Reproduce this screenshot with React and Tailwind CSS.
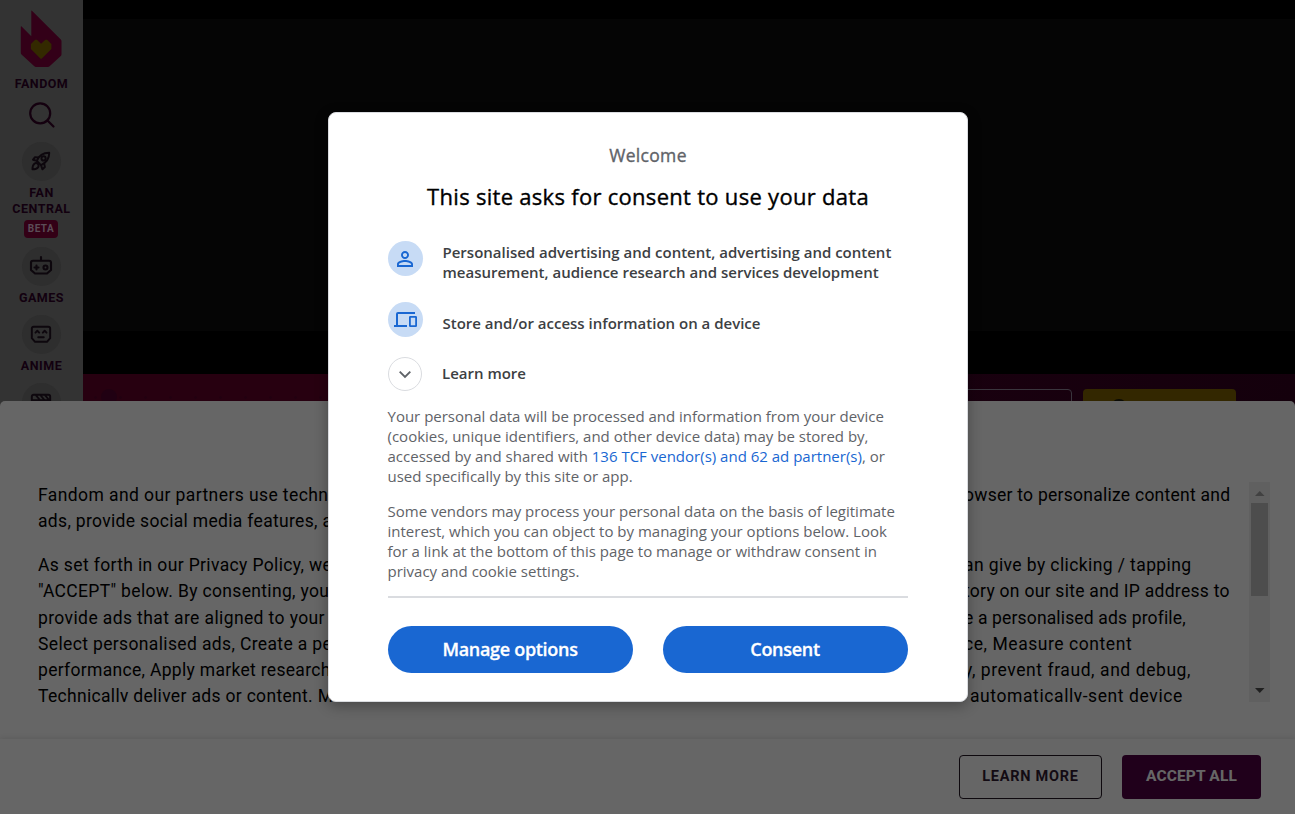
import React from "react";

const sheetRows = [
  { left: "Fandom and our partners use techn", right: "owser to personalize content and", leftClass: "tracking-[0.41px]", rightClass: "ml-[632px] tracking-[0.26px]" },
  { left: "ads, provide social media features, a", right: "", leftClass: "tracking-[0.32px]", rightClass: "" },
  null,
  { left: "As set forth in our Privacy Policy, we", right: "an give by clicking / tapping", leftClass: "tracking-[0.36px]", rightClass: "ml-[632px] tracking-[0.4px]" },
  { left: '"ACCEPT" below. By consenting, you', right: "tory on our site and IP address to", leftClass: "tracking-[0.34px]", rightClass: "ml-[632px] tracking-[0.27px]" },
  { left: "provide ads that are aligned to your", right: "e a personalised ads profile,", leftClass: "tracking-[0.39px]", rightClass: "ml-[632px] tracking-[0.15px]" },
  { left: "Select personalised ads, Create a pe", right: "ce, Measure content", leftClass: "tracking-[0.36px]", rightClass: "ml-[632px] tracking-[0.56px]" },
  { left: "performance, Apply market research", right: "y, prevent fraud, and debug,", leftClass: "tracking-[0.31px]", rightClass: "ml-[632px] tracking-[0.57px]" },
  { left: "Technically deliver ads or content. M", right: "automatically-sent device", leftClass: "tracking-[0.32px]", rightClass: "ml-[638px] tracking-[0.59px]" },
];

function Circle({ children, className = "" }) {
  return (
    <div className={`flex size-[39px] shrink-0 items-center justify-center rounded-full bg-[#2e2e2e] text-[#0d070d] ${className}`}>
      {children}
    </div>
  );
}

function IconSvg({ children, className = "size-6" }) {
  return (
    <svg className={`mr-px ${className}`} viewBox="0 0 24 24" fill="none" stroke="currentColor" strokeWidth="2.1" strokeLinecap="round" strokeLinejoin="round">
      {children}
    </svg>
  );
}

function Sidebar() {
  return (
    <aside className="flex h-full w-[83px] shrink-0 flex-col items-center bg-[#333333] text-center text-[12.5px] leading-4 font-bold tracking-[0.5px] text-[#12000f]">
      <svg className="mt-[10px] mr-[1.500px] shrink-0" width="42" height="58" viewBox="0 0 42 58">
        <path d="M11.300 1.200q0-1.200.9-.3L40.800 29.600q.7.700.7 1.800v12.800c0 .7-.2 1.300-.7 1.800L29.600 56.200q-.7.700-1.800.7H16q-1 0-1.700-.7L1.500 44.600q-.7-.7-.7-1.800V17q0-1.200.8-.4l9.700 9.600z" fill="#330018" />
        <path d="M16.900 29.800h-1.700l-4.300 4.200v5l9.200 9.300q1 1 2 0l9.300-9.300v-5L27.100 29.800h-1.700l-4.300 4z" fill="#332900" />
      </svg>
      <div className="mt-2 tracking-[0.45px]">FANDOM</div>
      <svg className="mt-[9px] shrink-0" width="28" height="28" viewBox="0 0 28 28" fill="none" stroke="#14000f" strokeWidth="2.200" strokeLinecap="round">
        <circle cx="12.2" cy="12.3" r="10" />
        <path d="m19.5 19.5 6 6" />
      </svg>
      <Circle className="mt-[13px]">
        <IconSvg className="mb-0.5 size-[22px]">
          <path d="M7.500 11.800C9.500 6.500 14 3 21 3c0 7-3.500 11-9 13.500z" />
          <circle cx="14.800" cy="9.200" r="2.300" />
          <path d="M9 8.200 5.500 7.800 3.300 10.600l4.200 1.200M15.500 14.800l.7 3.700-2.600 2.600-1.600-4.600" />
          <path d="M8.500 15.200c2 2 .7 5.900-5.800 5.900-.1-6.500 3.800-7.900 5.800-5.900z" />
        </IconSvg>
      </Circle>
      <div className="mt-1">FAN<br />CENTRAL</div>
      <div className="mt-[3px] mr-px flex h-[18px] w-[34px] shrink-0 items-center justify-center rounded bg-[#330016] text-[10px] tracking-[0.5px] text-[#5b4d57]">BETA</div>
      <Circle className="mt-[9px]">
        <IconSvg>
          <path d="M12 5.800V2M4 5.800h16q2 0 2 2V15l-4 3.500H6L2 15V7.800q0-2 2-2zM5.500 12.500h4M7.500 10.500v4" />
          <circle cx="16.500" cy="12.500" r="2" />
        </IconSvg>
      </Circle>
      <div className="mt-1">GAMES</div>
      <Circle className="mt-[9px]">
        <IconSvg className="mb-0.5 size-[22px]">
          <path d="M4 4h16q2 0 2 2v10.500L18.500 20.500h-13L2 16.500V6q0-2 2-2zM6 10.500l2-2 2 2M14 10.500l2-2 2 2M9 15.500h6" />
        </IconSvg>
      </Circle>
      <div className="mt-1">ANIME</div>
      <Circle className="mt-[9px]">
        <IconSvg className="size-[22px]">
          <path d="M2 19V5q0-2 2-2h16q2 0 2 2v14zM2 9h20M6 3l5 6M11 3l5 6M16 3l5 6" />
        </IconSvg>
      </Circle>
    </aside>
  );
}

function ConsentSheet() {
  return (
    <section className="absolute inset-x-0 top-[401px] bottom-0 flex flex-col overflow-hidden rounded-t-[5px] bg-[#666666]">
      <div className="mt-[81px] ml-[38px] flex h-[220px] w-[1232px] shrink-0">
        <div className="w-[1211px] overflow-hidden text-[17.5px] leading-[26.25px] text-black">
          {sheetRows.map((row, i) =>
            row ? (
              <div key={i} className="flex whitespace-nowrap">
                <span className={`w-[294px] shrink-0 ${row.leftClass}`}>{row.left}</span>
                <span className={row.rightClass}>{row.right}</span>
              </div>
            ) : (
              <div key={i} className="h-[17.5px]" />
            )
          )}
        </div>
        <div className="flex w-[21px] flex-col items-center bg-[#606060]">
          <svg width="21" height="21" viewBox="0 0 21 21"><path d="M6 14h9.500l-4.750-5z" fill="#414141" /></svg>
          <div className="h-[93px] w-[17px] bg-[#4d4d4d]" />
          <div className="grow" />
          <svg width="21" height="21" viewBox="0 0 21 21"><path d="M6 7h9.500l-4.750 5z" fill="#202020" /></svg>
        </div>
      </div>
      <footer className="mt-[37px] flex grow justify-end gap-5 pt-4 pr-[34px] shadow-[0_-1px_5px_rgba(0,0,0,0.1)]">
        <button className="h-11 w-[143px] rounded border border-[#0e090e] text-[14.5px] font-bold tracking-[0.75px] text-[#130b13]">LEARN MORE</button>
        <button className="h-11 w-[139px] rounded bg-[#20001b] text-[15.5px] font-extrabold tracking-[0.1px] text-[#666666]">ACCEPT ALL</button>
      </footer>
    </section>
  );
}

function Badge({ children }) {
  return (
    <div className="flex size-[35px] shrink-0 items-center justify-center rounded-full bg-[#c7dbf5] text-[#1967d2]">
      {children}
    </div>
  );
}

function ConsentDialog() {
  return (
    <div role="dialog" className="absolute top-[112px] left-[328px] flex h-[590px] w-[640px] flex-col rounded-lg border border-[#dadce0] bg-white px-[59px] font-['Open_Sans',sans-serif] text-[15px] leading-5 text-[#5f6368] shadow-[0_4px_14px_rgba(0,0,0,0.3)]">
      <p className="mt-[31px] text-center text-[17.5px] leading-[22px] font-medium tracking-[0.32px] [-webkit-text-stroke:0.35px]">Welcome</p>
      <h1 className="mt-[15px] text-center text-[22px] leading-[30px] font-medium tracking-[0.29px] whitespace-nowrap text-black [-webkit-text-stroke:0.35px]">This site asks for consent to use your data</h1>
      <div className="mt-[30px] flex h-[61px] gap-[19.5px] font-semibold text-[#3c4043]">
        <Badge>
          <svg className="mr-px" width="24" height="24" viewBox="0 0 24 24" fill="currentColor">
            <path d="M12 5.900c1.160 0 2.100.940 2.100 2.100s-.940 2.100-2.100 2.100S9.900 9.160 9.900 8s.940-2.100 2.100-2.100m0 9c2.970 0 6.100 1.460 6.100 2.100v1.100H5.900V17c0-.640 3.130-2.100 6.100-2.100M12 4C9.790 4 8 5.790 8 8s1.790 4 4 4 4-1.790 4-4-1.790-4-4-4zm0 9c-2.670 0-8 1.340-8 4v3h16v-3c0-2.660-5.330-4-8-4z" />
          </svg>
        </Badge>
        <div className="mt-px whitespace-nowrap">
          Personalised advertising and content, advertising and content<br />
          measurement, audience research and services development
        </div>
      </div>
      <div className="flex h-[55px] gap-[19.5px] font-semibold text-[#3c4043]">
        <Badge>
          <svg width="35" height="35" viewBox="0 0 35 35" fill="none" stroke="currentColor" strokeWidth="2">
            <path d="M27 11H10q-1 0-1 1v12M6 24h13" />
            <rect x="21.900" y="14.900" width="6.200" height="9.200" rx="0.400" strokeWidth="1.800" />
          </svg>
        </Badge>
        <div className="mt-[11px]">Store and/or access information on a device</div>
      </div>
      <div className="flex h-[49px] items-start gap-5 font-semibold text-[#3c4043]">
        <div className="flex size-[34px] shrink-0 items-center justify-center rounded-full border border-[#dadce0] text-[#5f6368]">
          <svg className="mt-0.5" width="14" height="10" viewBox="0 0 14 10" fill="none" stroke="currentColor" strokeWidth="1.900"><path d="m1.700 1.700 5.300 5.300 5.300-5.300" /></svg>
        </div>
        <div className="mt-[6px]">Learn more</div>
      </div>
      <p className="-ml-[0.500px] whitespace-nowrap">
        Your personal data will be processed and information from your device<br />
        (cookies, unique identifiers, and other device data) may be stored by,<br />
        accessed by and shared with <a className="text-[#1967d2]">136 TCF vendor(s) and 62 ad partner(s)</a>, or<br />
        used specifically by this site or app.
      </p>
      <p className="mt-[15px] -ml-[0.500px] whitespace-nowrap">
        Some vendors may process your personal data on the basis of legitimate<br />
        interest, which you can object to by managing your options below. Look<br />
        for a link at the bottom of this page to manage or withdraw consent in<br />
        privacy and cookie settings.
      </p>
      <hr className="mt-[15px] border-t-2 border-[#dadce0]" />
      <div className="mt-7 grid grid-cols-2 gap-[30px] text-[18px] font-semibold tracking-[-0.3px] text-white [-webkit-text-stroke:0.3px]">
        <button className="h-[47px] rounded-full bg-[#1967d2] pr-px pb-0.5">Manage options</button>
        <button className="h-[47px] rounded-full bg-[#1967d2] pr-px pb-0.5">Consent</button>
      </div>
    </div>
  );
}

export default function App() {
  return (
    <div className="relative flex h-[814px] w-full overflow-hidden bg-black font-['Roboto',sans-serif]">
      <Sidebar />
      <main className="flex grow flex-col">
        <div className="mt-[19px] h-[312px] bg-[#050505]" />
        <div className="mt-[43px] flex h-[60px] justify-end gap-[11px] bg-[linear-gradient(90deg,#270010_0%,#270010_20%,#1b0010_60%,#14000c_100%)] pt-[15px] pr-[59px]">
          <div className="mr-auto h-full w-[300px] bg-[radial-gradient(#220010_1.500px,transparent_2px)] bg-[size:25px_17px]">
            <div className="ml-[18px] size-4 rounded-full bg-[#200012]" />
          </div>
          <div className="h-11 w-[110px] rounded border border-[#3a353d]" />
          <div className="h-11 w-[153px] rounded bg-[#332700]">
            <div className="mt-2.5 ml-[28px] size-4 rounded-full border-2 border-[#0b0b05]" />
          </div>
        </div>
      </main>
      <ConsentSheet />
      <ConsentDialog />
    </div>
  );
}
